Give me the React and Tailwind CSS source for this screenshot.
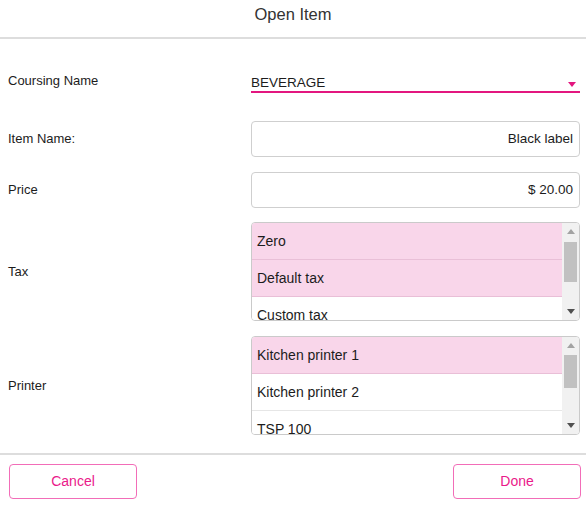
import React from "react";

function ScrollBar({ thumbTop, thumbH }) {
  return (
    <div className="w-[17px] bg-[#f1f1f1] flex flex-col items-center shrink-0">
      <div className="h-[17px] w-full flex items-center justify-center">
        <svg width="8" height="5" viewBox="0 0 8 5"><path d="M0 5 L4 0 L8 5 Z" fill="#a3a3a3" /></svg>
      </div>
      <div className="flex-1 w-full px-[2px]">
        <div className="w-full bg-[#c1c1c1]" style={{ marginTop: thumbTop, height: thumbH }} />
      </div>
      <div className="h-[17px] w-full flex items-center justify-center">
        <svg width="8" height="5" viewBox="0 0 8 5"><path d="M0 0 L8 0 L4 5 Z" fill="#505050" /></svg>
      </div>
    </div>
  );
}

function ListBox({ items, thumbTop, thumbH }) {
  return (
    <div className="h-[99px] w-full border border-[#cacaca] rounded-[4px] overflow-hidden flex">
      <div className="flex-1 flex flex-col overflow-hidden">
        {items.map((it, i) => (
          <div
            key={i}
            className={
              it.sel
                ? "h-[37px] shrink-0 flex items-center pl-[5px] text-[14px] bg-[#f9d6ea] border-b border-[#e9bfd7]"
                : "h-[37px] shrink-0 flex items-center pl-[5px] text-[14px] bg-white border-b border-[#e6e6e6]"
            }
          >
            {it.label}
          </div>
        ))}
      </div>
      <ScrollBar thumbTop={thumbTop} thumbH={thumbH} />
    </div>
  );
}

export default function App() {
  return (
    <div className="w-[586px] h-[505px] bg-white font-['Liberation_Sans',Arial,sans-serif] text-[#1c1c1c] flex flex-col overflow-hidden">
      <div className="h-[39px] shrink-0 border-b-2 border-[#dddddd] flex justify-center">
        <span className="text-[16.5px] leading-[28px] text-[#333333]">Open Item</span>
      </div>

      <div className="flex mt-[32px] items-center">
        <div className="w-[251px] pl-[8px] text-[13px] leading-[20px] -mt-[3px]">Coursing Name</div>
        <div className="w-[329px] h-[22px] border-b-2 border-[#e3167f] flex items-center justify-between">
          <span className="text-[13.5px] leading-[20px] relative top-[2px]">BEVERAGE</span>
          <svg width="8" height="5" viewBox="0 0 8 5" className="mr-[4px] relative top-[3px]"><path d="M0 0 L8 0 L4 5 Z" fill="#e3167f" /></svg>
        </div>
      </div>

      <div className="flex mt-[28px] items-center">
        <div className="w-[251px] pl-[8px] text-[13px]">Item Name:</div>
        <div className="w-[329px] h-[36px] border border-[#cfcfcf] rounded-[4px] flex items-center justify-end pr-[6px] text-[13.5px]">
          Black label
        </div>
      </div>

      <div className="flex mt-[15px] items-center">
        <div className="w-[251px] pl-[8px] text-[13px]">Price</div>
        <div className="w-[329px] h-[36px] border border-[#cfcfcf] rounded-[4px] flex items-center justify-end pr-[6px] text-[13.5px]">
          $ 20.00
        </div>
      </div>

      <div className="flex mt-[14px] items-center">
        <div className="w-[251px] pl-[8px] text-[13px]">Tax</div>
        <div className="w-[329px]">
          <ListBox
            items={[
              { label: "Zero", sel: true },
              { label: "Default tax", sel: true },
              { label: "Custom tax", sel: false },
            ]}
            thumbTop={2}
            thumbH={40}
          />
        </div>
      </div>

      <div className="flex mt-[15px] items-center">
        <div className="w-[251px] pl-[8px] text-[13px]">Printer</div>
        <div className="w-[329px]">
          <ListBox
            items={[
              { label: "Kitchen printer 1", sel: true },
              { label: "Kitchen printer 2", sel: false },
              { label: "TSP 100", sel: false },
            ]}
            thumbTop={1}
            thumbH={33}
          />
        </div>
      </div>

      <div className="mt-[18px] border-t-2 border-[#dddddd] flex justify-between pt-[9px] pl-[9px] pr-[5px]">
        <button className="w-[128px] h-[35px] border border-[#f26db8] rounded-[4px] text-[#ea1a8a] text-[14px] bg-white">
          Cancel
        </button>
        <button className="w-[128px] h-[35px] border border-[#f26db8] rounded-[4px] text-[#ea1a8a] text-[14px] bg-white">
          Done
        </button>
      </div>
    </div>
  );
}
